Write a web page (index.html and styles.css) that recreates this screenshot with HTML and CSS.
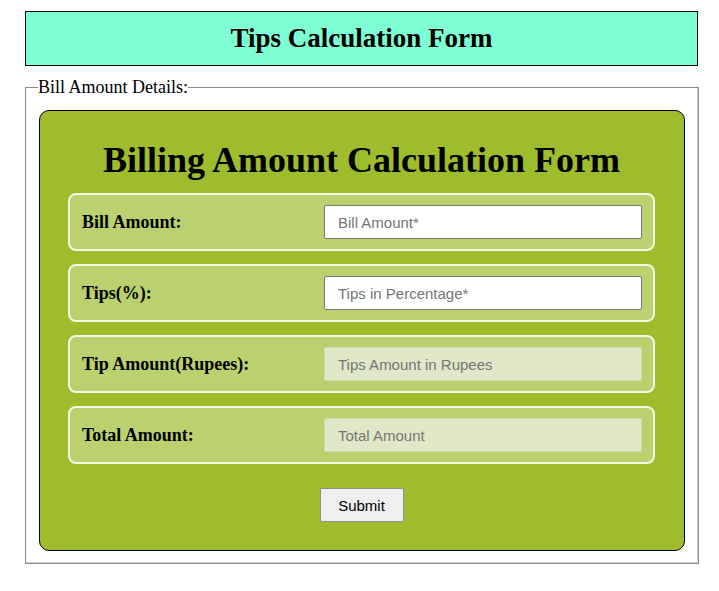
FILE: index.html
```html
<!DOCTYPE html>
<html>
<head>
<meta charset="utf-8">
<link rel="stylesheet" href="styles.css">
</head>
<body>
<div class="page">
  <header class="banner"><h1>Tips Calculation Form</h1></header>
  <fieldset class="details">
    <legend>Bill Amount Details:</legend>
    <form class="panel">
      <h2>Billing Amount Calculation Form</h2>
      <div class="row"><label>Bill Amount:</label><input type="text" placeholder="Bill Amount*"></div>
      <div class="row"><label>Tips(%):</label><input type="text" placeholder="Tips in Percentage*"></div>
      <div class="row"><label>Tip Amount(Rupees):</label><input type="text" class="ro" placeholder="Tips Amount in Rupees" disabled></div>
      <div class="row"><label>Total Amount:</label><input type="text" class="ro" placeholder="Total Amount" disabled></div>
      <div class="actions"><button type="button">Submit</button></div>
    </form>
  </fieldset>
</div>
</body>
</html>
```
FILE: styles.css
```css
body {
  margin: 8px;
  font-family: "Liberation Serif", "Times New Roman", serif;
  background: #fff;
}
.page {
  width: 673px;
  margin: 3px 0 0 17px;
}
.banner {
  background: #7fffd4;
  border: 1px solid #000;
  height: 53px;
  display: flex;
  align-items: center;
  justify-content: center;
}
.banner h1 {
  margin: 0;
  font-size: 27px;
  font-weight: bold;
}
.details {
  margin: 11px 0 0;
  padding: 12px 13px 12px;
  border: 1px solid #8a8a8a;
  box-shadow: inset -1px -1px 0 #d0d0d0;
}
.details legend {
  font-size: 18px;
  padding: 0;
  margin-left: -1px;
}
.panel {
  background: #9ebc2b;
  border: 1px solid #000;
  border-radius: 10px;
  padding: 29px 29px 28px 28px;
}
.panel h2 {
  margin: 0 0 12px;
  text-align: center;
  font-size: 36px;
  line-height: 41px;
  font-weight: bold;
}
.row {
  display: flex;
  align-items: center;
  height: 54px;
  border: 2px solid #f4f8e4;
  border-radius: 8px;
  background: #bbd06f;
  padding: 0 11px 0 12px;
  margin-bottom: 13px;
}
.row label {
  width: 242px;
  font-weight: bold;
  font-size: 18px;
}
.row input {
  width: 318px;
  height: 34px;
  box-sizing: border-box;
  border: 1px solid #767676;
  border-radius: 2px;
  padding: 0 13px;
  font-family: "Liberation Sans", Arial, sans-serif;
  font-size: 15px;
  background: #fff;
}
.row input::placeholder {
  color: #757575;
}
.row input.ro {
  background: #e1e8c7;
  border: 1px solid #d2dbaa;
}
.actions {
  display: flex;
  justify-content: center;
  padding-top: 11px;
}
.actions button {
  width: 84px;
  height: 34px;
  font-family: "Liberation Sans", Arial, sans-serif;
  font-size: 15px;
  background: #efefef;
  border: 1px solid #8f8f8f;
  border-radius: 2px;
  color: #000;
}
```
